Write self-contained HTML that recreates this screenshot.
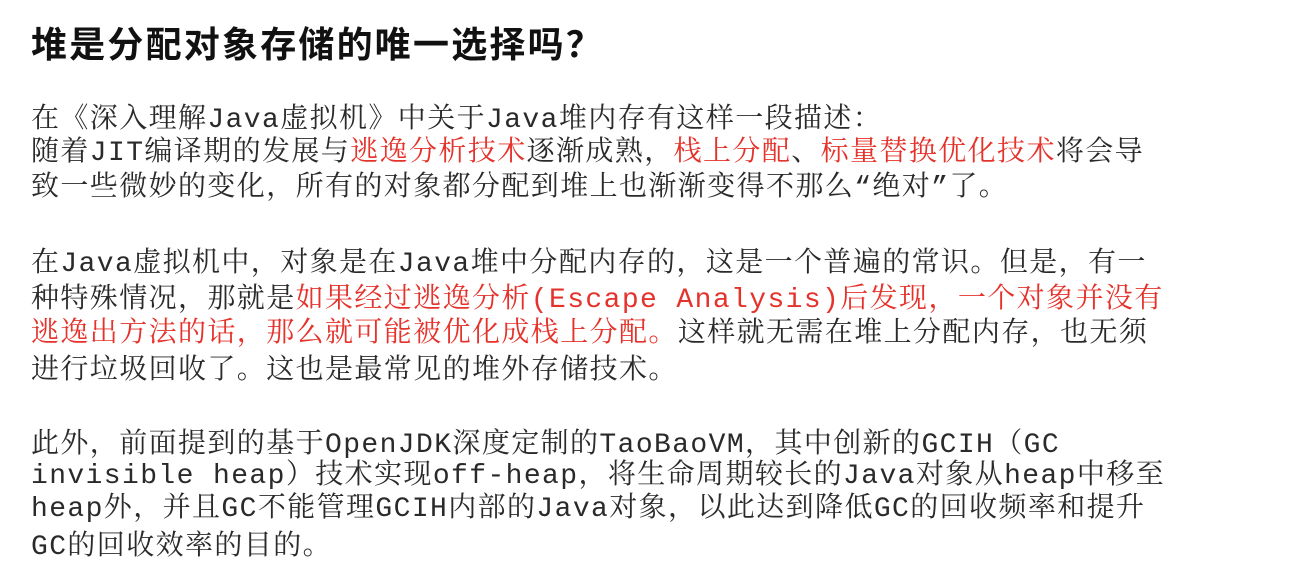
<!DOCTYPE html>
<html><head><meta charset="utf-8"><style>
body{margin:0;width:1300px;height:583px;background:#fff;overflow:hidden;position:relative}
.t{position:absolute;left:31px;top:16px;font:bold 36px "Liberation Sans","Noto Sans CJK SC",sans-serif;letter-spacing:2.2px;color:#111;white-space:nowrap}
.l{position:absolute;left:31px;font-family:"Liberation Mono","Noto Serif CJK SC",monospace;font-size:28px;letter-spacing:1.4px;color:#2a2a2a;white-space:nowrap;line-height:34px}
.r{color:#e5322b}
</style></head><body>
<div class="t">堆是分配对象存储的唯一选择吗？</div>
<div class="l" style="top:104px">在《深入理解Java虚拟机》中关于Java堆内存有这样一段描述：</div>
<div class="l" style="top:137px">随着JIT编译期的发展与<span class="r">逃逸分析技术</span>逐渐成熟，<span class="r">栈上分配</span>、<span class="r">标量替换优化技术</span>将会导</div>
<div class="l" style="top:172px">致一些微妙的变化，所有的对象都分配到堆上也渐渐变得不那么“绝对”了。</div>
<div class="l" style="top:248px">在Java虚拟机中，对象是在Java堆中分配内存的，这是一个普遍的常识。但是，有一</div>
<div class="l" style="top:284px">种特殊情况，那就是<span class="r">如果经过逃逸分析(Escape Analysis)后发现，一个对象并没有</span></div>
<div class="l" style="top:318px"><span class="r">逃逸出方法的话，那么就可能被优化成栈上分配。</span>这样就无需在堆上分配内存，也无须</div>
<div class="l" style="top:355px">进行垃圾回收了。这也是最常见的堆外存储技术。</div>
<div class="l" style="top:429px">此外，前面提到的基于OpenJDK深度定制的TaoBaoVM，其中创新的GCIH（GC</div>
<div class="l" style="top:460px">invisible heap）技术实现off-heap，将生命周期较长的Java对象从heap中移至</div>
<div class="l" style="top:493px">heap外，并且GC不能管理GCIH内部的Java对象，以此达到降低GC的回收频率和提升</div>
<div class="l" style="top:531px">GC的回收效率的目的。</div>
</body></html>
